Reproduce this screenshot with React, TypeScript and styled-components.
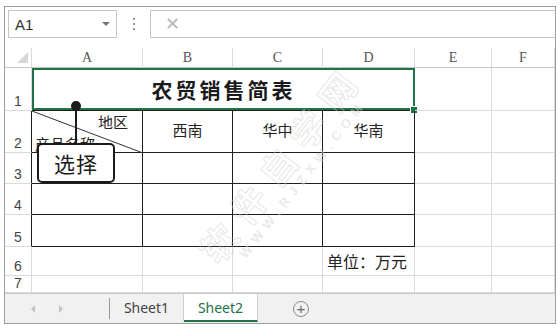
import { Fragment } from "react";
import styled, { createGlobalStyle } from "styled-components";

const GlobalStyle = createGlobalStyle`
  html, body {
    margin: 0;
    padding: 0;
    background: #ffffff;
  }
  body {
    font-family: "Noto Sans", "Noto Sans CJK SC", sans-serif;
  }
`;

const CJK = `"Noto Sans CJK SC", "Noto Sans", sans-serif`;
const GRID = "#dadada";
const DARK = "#1e1e1e";
const GREEN = "#217346";

const Frame = styled.div`
  position: relative;
  margin: 6px 0 0 4px;
  width: 552px;
  height: 318px;
  border: 1px solid #9c9c9c;
  box-sizing: border-box;
  display: flex;
  flex-direction: column;
  overflow: hidden;
`;

const Toolbar = styled.div`
  height: 41px;
  flex: none;
  display: flex;
  align-items: flex-start;
  padding: 3px 0 0 3px;
  box-sizing: border-box;
`;

const NameBox = styled.div`
  width: 109px;
  height: 28px;
  border: 1px solid #c6c6c6;
  box-sizing: border-box;
  display: flex;
  align-items: center;
  justify-content: space-between;
  padding: 0 6px 0 6px;
  font-family: "Liberation Sans", sans-serif;
  font-size: 15px;
  color: #333;
`;

const Caret = styled.span`
  width: 0;
  height: 0;
  border-left: 4px solid transparent;
  border-right: 4px solid transparent;
  border-top: 4px solid #777;
`;

const Dots = styled.div`
  width: 33px;
  height: 28px;
  display: flex;
  flex-direction: column;
  align-items: center;
  justify-content: center;
  gap: 3px;
  span {
    width: 2px;
    height: 2px;
    background: #9a9a9a;
  }
`;

const FormulaBox = styled.div`
  flex: 1;
  height: 28px;
  border: 1px solid #c6c6c6;
  border-right: none;
  box-sizing: border-box;
  display: flex;
  align-items: center;
  padding-left: 14px;
  color: #b8b8b8;
  font-family: "Liberation Sans", sans-serif;
  font-size: 18px;
`;

const Sheet = styled.div`
  position: relative;
  flex: none;
  display: grid;
  grid-template-columns: 27px 111px 90px 90px 92px 77px 63px;
  grid-template-rows: 20px 43px 42px 31px 31px 32px 29px 17px;
`;

const Corner = styled.div`
  border-right: 1px solid ${GRID};
  border-bottom: 1px solid #c4c4c4;
  display: flex;
  align-items: flex-end;
  justify-content: flex-end;
  padding: 0 3px 4px 0;
  box-sizing: border-box;
  span {
    width: 0;
    height: 0;
    border-left: 11px solid transparent;
    border-bottom: 11px solid #d6d6d6;
  }
`;

const ColHead = styled.div`
  border-right: 1px solid ${GRID};
  border-bottom: 1px solid #c4c4c4;
  box-sizing: border-box;
  display: flex;
  align-items: flex-end;
  justify-content: center;
  padding-bottom: 1px;
  font-family: "Liberation Serif", serif;
  font-size: 14px;
  color: #555;
`;

const RowHead = styled.div<{ $dark?: boolean }>`
  border-right: 1px solid ${(p) => (p.$dark ? DARK : GRID)};
  border-bottom: 1px solid ${GRID};
  box-sizing: border-box;
  display: flex;
  align-items: flex-end;
  justify-content: center;
  padding-bottom: 1px;
  font-family: "Liberation Sans", sans-serif;
  font-size: 14px;
  line-height: 16px;
  color: #444;
`;

const Cell = styled.div<{ $dark?: boolean; $align?: string }>`
  position: relative;
  border-right: 1px solid ${(p) => (p.$dark ? DARK : GRID)};
  border-bottom: 1px solid ${(p) => (p.$dark ? DARK : GRID)};
  box-sizing: border-box;
  display: flex;
  align-items: center;
  justify-content: ${(p) => p.$align || "center"};
  font-family: ${CJK};
  font-size: 15px;
  color: #222;
`;

const HeadCell = styled(Cell)`
  align-items: flex-start;
  padding-top: 8px;
`;

const TitleCell = styled.div`
  grid-column: 2 / span 4;
  position: relative;
  border-bottom: 1px solid ${DARK};
  box-shadow: inset 0 0 0 2px ${GREEN};
  display: flex;
  align-items: center;
  justify-content: center;
  font-family: ${CJK};
  font-size: 21px;
  font-weight: 600;
  letter-spacing: 3px;
  color: #1a1a1a;
`;

const FillHandle = styled.span`
  position: absolute;
  right: -3px;
  bottom: -4px;
  width: 6px;
  height: 6px;
  background: ${GREEN};
  border: 1px solid #fff;
`;

const SplitCell = styled(Cell)`
  flex-direction: column;
  align-items: stretch;
  justify-content: space-between;
  padding: 1px 14px 0 3px;
  svg {
    position: absolute;
    left: 0;
    top: 0;
  }
`;

const SplitTop = styled.span`
  align-self: flex-end;
  line-height: 20px;
`;

const SplitBottom = styled.span`
  align-self: flex-start;
  line-height: 20px;
  margin-bottom: -2px;
`;

const UnitCell = styled(Cell)`
  padding-left: 4px;
  font-size: 16px;
`;

const Callout = styled.div`
  position: absolute;
  left: 32px;
  top: 53px;
  width: 78px;
  display: flex;
  flex-direction: column;
  align-items: center;
  pointer-events: none;
`;

const Dot = styled.span`
  width: 10px;
  height: 10px;
  border-radius: 50%;
  background: #1a1a1a;
`;

const Stem = styled.span`
  width: 2px;
  height: 35px;
  margin-top: -3px;
  background: #1a1a1a;
`;

const CalloutBox = styled.div`
  width: 78px;
  height: 40px;
  box-sizing: border-box;
  border: 2px solid #1a1a1a;
  border-radius: 5px;
  background: #fff;
  display: flex;
  align-items: center;
  justify-content: center;
  font-family: ${CJK};
  font-size: 21px;
  letter-spacing: 1px;
  color: #1a1a1a;
`;

const Watermark = styled.div`
  position: absolute;
  left: 152px;
  top: 92px;
  width: 260px;
  display: flex;
  flex-direction: column;
  align-items: center;
  transform: rotate(-52deg);
  pointer-events: none;
  font-family: ${CJK};
  line-height: 1;
`;

const WaterBig = styled.span`
  font-size: 36px;
  font-weight: 700;
  letter-spacing: 12px;
  color: rgba(255, 255, 255, 0);
  -webkit-text-stroke: 1px rgba(205, 205, 205, 0.5);
`;

const WaterSmall = styled.span`
  margin-top: 4px;
  font-family: "Liberation Sans", sans-serif;
  font-size: 13px;
  font-weight: 700;
  letter-spacing: 6px;
  color: rgba(215, 215, 215, 0.55);
`;

const TabBar = styled.div`
  flex: 1;
  display: flex;
  align-items: stretch;
  background: #f1f1f1;
  border-top: 1px solid #c8c8c8;
`;

const Nav = styled.div`
  width: 105px;
  display: flex;
  align-items: center;
  padding-left: 26px;
  gap: 24px;
  box-sizing: border-box;
  border-right: 1px solid #9a9a9a;
  margin: 4px 0 4px;
`;

const Arrow = styled.span<{ $dir: "left" | "right" }>`
  width: 0;
  height: 0;
  border-top: 4px solid transparent;
  border-bottom: 4px solid transparent;
  ${(p) =>
    p.$dir === "left"
      ? "border-right: 4px solid #c4c4c4;"
      : "border-left: 4px solid #c4c4c4;"}
`;

const Tab = styled.div<{ $active?: boolean }>`
  width: 74px;
  display: flex;
  align-items: center;
  justify-content: center;
  box-sizing: border-box;
  font-family: "Noto Sans", sans-serif;
  font-size: 14px;
  color: ${(p) => (p.$active ? GREEN : "#444")};
  background: ${(p) => (p.$active ? "#ffffff" : "transparent")};
  border-right: 1px solid #d0d0d0;
  border-bottom: 2px solid ${(p) => (p.$active ? GREEN : "transparent")};
  margin-bottom: 1px;
`;

const AddButton = styled.div`
  margin: 0 0 0 35px;
  align-self: center;
  width: 16px;
  height: 16px;
  border-radius: 50%;
  border: 1px solid #8a8a8a;
  box-sizing: border-box;
  display: flex;
  align-items: center;
  justify-content: center;
  color: #666;
  font-family: "Liberation Sans", sans-serif;
  font-size: 15px;
  line-height: 1;
`;

const columns = ["A", "B", "C", "D", "E", "F"];

export default function App() {
  return (
    <>
      <GlobalStyle />
      <Frame>
        <Toolbar>
          <NameBox>
            A1
            <Caret />
          </NameBox>
          <Dots>
            <span />
            <span />
            <span />
          </Dots>
          <FormulaBox>✕</FormulaBox>
        </Toolbar>

        <Sheet>
          <Corner>
            <span />
          </Corner>
          {columns.map((c) => (
            <ColHead key={c}>{c}</ColHead>
          ))}

          <RowHead>1</RowHead>
          <TitleCell>
            农贸销售简表
            <FillHandle />
          </TitleCell>
          <Cell />
          <Cell />

          <RowHead $dark>2</RowHead>
          <SplitCell $dark>
            <svg width="111" height="42">
              <line x1="0" y1="0" x2="111" y2="42" stroke="#333" strokeWidth="1" />
            </svg>
            <SplitTop>地区</SplitTop>
            <SplitBottom>产品名称</SplitBottom>
          </SplitCell>
          <HeadCell $dark>西南</HeadCell>
          <HeadCell $dark>华中</HeadCell>
          <HeadCell $dark>华南</HeadCell>
          <Cell />
          <Cell />

          {["3", "4", "5"].map((r) => (
            <Fragment key={r}>
              <RowHead $dark>{r}</RowHead>
              <Cell $dark />
              <Cell $dark />
              <Cell $dark />
              <Cell $dark />
              <Cell />
              <Cell />
            </Fragment>
          ))}

          <RowHead>6</RowHead>
          <Cell />
          <Cell />
          <Cell />
          <UnitCell $align="flex-start">单位：万元</UnitCell>
          <Cell />
          <Cell />

          <RowHead>7</RowHead>
          <Cell />
          <Cell />
          <Cell />
          <Cell />
          <Cell />
          <Cell />

          <Callout>
            <Dot />
            <Stem />
            <CalloutBox>选择</CalloutBox>
          </Callout>

          <Watermark>
            <WaterBig>软件自学网</WaterBig>
            <WaterSmall>WWW.RJZXW.COM</WaterSmall>
          </Watermark>
        </Sheet>

        <TabBar>
          <Nav>
            <Arrow $dir="left" />
            <Arrow $dir="right" />
          </Nav>
          <Tab>Sheet1</Tab>
          <Tab $active>Sheet2</Tab>
          <AddButton>+</AddButton>
        </TabBar>
      </Frame>
    </>
  );
}
